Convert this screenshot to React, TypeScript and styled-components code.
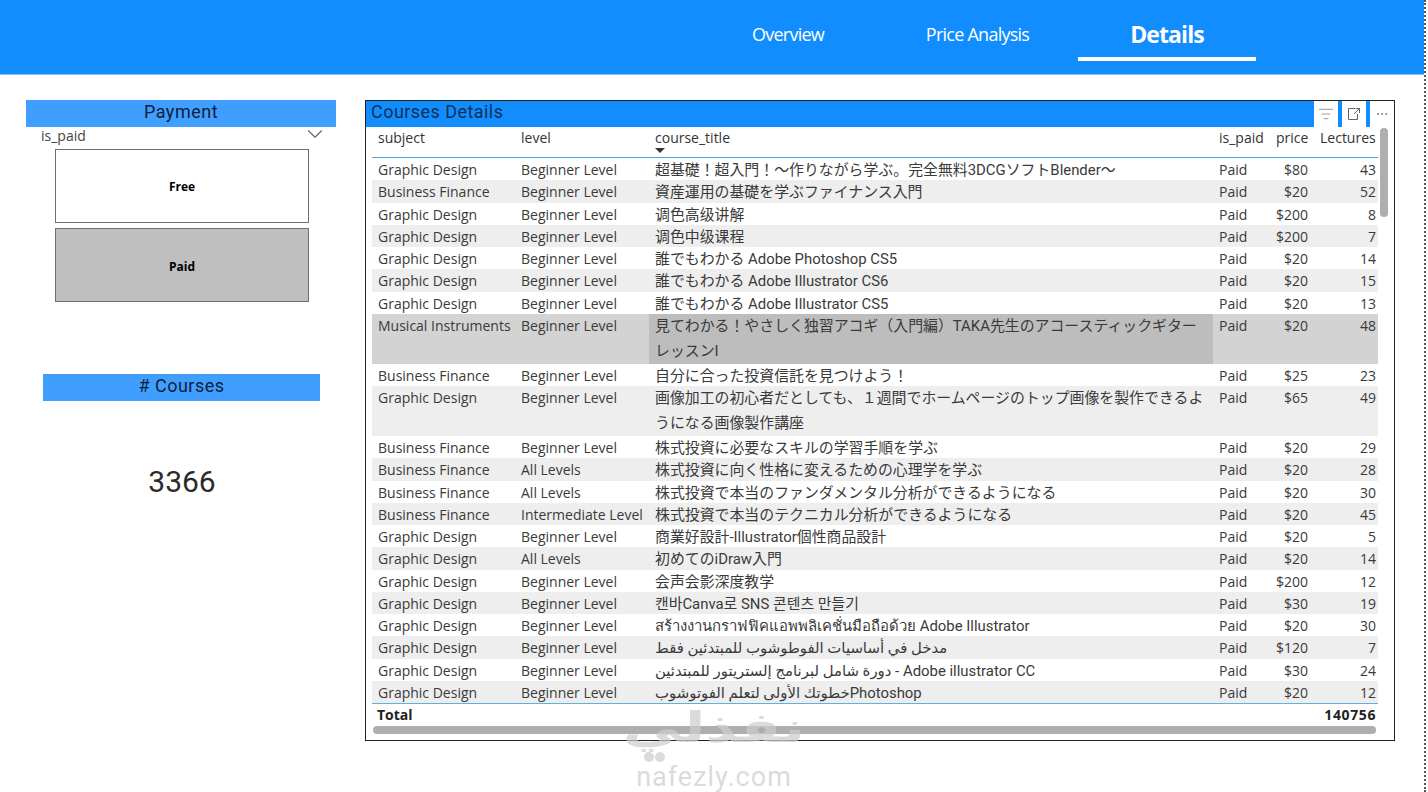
import React from 'react';
import styled, { createGlobalStyle } from 'styled-components';
import { ChevronDown, Ellipsis, ListFilter } from 'lucide-react';

const GlobalStyle = createGlobalStyle`
    html, body {
        margin: 0;
        padding: 0;
        background: #fff;
    }
`;

const COLUMNS = '143px 134px 564px 57px 44px 64px';
const TEXT_FONT = `'Open Sans', 'Noto Sans CJK JP', 'DejaVu Sans', sans-serif`;
const TITLE_FONT = `'Roboto', 'Noto Sans CJK JP', 'DejaVu Sans', sans-serif`;
const DIN_FONT = `'Roboto', 'Liberation Sans', sans-serif`;

const Page = styled.div`
    width: 1424px;
    height: 792px;
    position: relative;
    overflow: hidden;
    border-right: 2px dotted #555;
    font-family: ${TEXT_FONT};
`;

const Header = styled.header`
    height: 75px;
    box-sizing: border-box;
    background: #118dff;
    border-bottom: 1px solid #85c3fb;
    display: flex;
    padding-left: 714px;
`;

const NavItem = styled.div<{ $active?: boolean; $width: number; $shift?: number }>`
    width: ${(p) => p.$width}px;
    height: 61px;
    box-sizing: border-box;
    display: flex;
    align-items: center;
    justify-content: center;
    padding: 11px 0 0 ${(p) => p.$shift ?? 0}px;
    color: #fff;
    font-size: ${(p) => (p.$active ? '23px' : '18px')};
    font-weight: ${(p) => (p.$active ? 700 : 400)};
    letter-spacing: ${(p) => (p.$active ? '-0.9px' : '-0.75px')};
    border-bottom: ${(p) => (p.$active ? '4px solid #fff' : '4px solid transparent')};
`;

const Main = styled.main`
    display: flex;
    gap: 29px;
    padding: 25px 0 0 26px;
`;

const LeftColumn = styled.aside`
    width: 310px;
    display: flex;
    flex-direction: column;
`;

const CardTitle = styled.div<{ $inset?: boolean }>`
    height: 27px;
    box-sizing: border-box;
    padding-bottom: 4px;
    width: ${(p) => (p.$inset ? '277px' : '310px')};
    margin-left: ${(p) => (p.$inset ? '17px' : '0')};
    margin-top: ${(p) => (p.$inset ? '72px' : '0')};
    background: #409eff;
    color: #0f1f38;
    font-family: ${DIN_FONT};
    font-size: 18px;
    letter-spacing: 0.5px;
    display: flex;
    align-items: center;
    justify-content: center;
`;

const SlicerHead = styled.div`
    height: 22px;
    box-sizing: border-box;
    display: flex;
    align-items: center;
    justify-content: space-between;
    padding: 0 8px 6px 15px;
    font-size: 14px;
    color: #444;

    svg {
        margin: -9px 0 -7px;
    }
`;

const SlicerList = styled.div`
    display: flex;
    flex-direction: column;
    gap: 5px;
    margin-left: 29px;
    width: 254px;
`;

const SlicerButton = styled.div<{ $selected?: boolean }>`
    height: 74px;
    box-sizing: border-box;
    border: 1px solid #6f6f6f;
    background: ${(p) => (p.$selected ? '#bfbfbf' : '#fff')};
    color: #000;
    font-size: 12px;
    font-weight: 700;
    padding-top: ${(p) => (p.$selected ? '3px' : '0')};
    display: flex;
    align-items: center;
    justify-content: center;
`;

const BigNumber = styled.div`
    margin-top: 61px;
    text-align: center;
    font-family: ${DIN_FONT};
    font-size: 30px;
    line-height: 40px;
    color: #2b2b2b;
    padding-left: 2px;
`;

const TableCard = styled.section`
    width: 1030px;
    height: 641px;
    box-sizing: border-box;
    border: 1px solid #222;
    position: relative;
    display: flex;
    flex-direction: column;
`;

const TitleBar = styled.div`
    height: 26px;
    flex: none;
    background: #118dff;
    display: flex;
    align-items: center;
    justify-content: space-between;
    padding-left: 5px;
`;

const TitleText = styled.div`
    color: #0c3057;
    font-family: ${DIN_FONT};
    font-size: 18px;
    line-height: 20px;
    letter-spacing: 0.45px;
    margin-top: -5px;
`;

const ToolGroup = styled.div`
    display: flex;
    gap: 4px;
    height: 100%;
`;

const ToolButton = styled.div`
    width: 24px;
    background: #fff;
    display: flex;
    align-items: center;
    justify-content: center;
    color: #666;
`;

const TableBody = styled.div`
    padding-left: 6px;
    width: 1006px;
`;

const GridRow = styled.div`
    display: grid;
    grid-template-columns: ${COLUMNS};
`;

const HeadRow = styled(GridRow)`
    height: 31px;
    box-sizing: border-box;
    border-bottom: 1px solid #45a6ee;
    font-size: 14px;
    color: #333;
`;

const HeadCell = styled.div<{ $right?: boolean; $pad?: number }>`
    position: relative;
    padding: 1px ${(p) => p.$pad ?? 6}px 0 6px;
    text-align: ${(p) => (p.$right ? 'right' : 'left')};
    white-space: nowrap;
    line-height: 19px;
`;

const SortCaret = styled.span`
    position: absolute;
    left: 6px;
    top: 21px;
    width: 0;
    height: 0;
    border-left: 5px solid transparent;
    border-right: 5px solid transparent;
    border-top: 5px solid #333;
`;

const DataRow = styled(GridRow)<{ $tone: 'plain' | 'stripe' | 'selected'; $lines: number }>`
    height: ${(p) => (p.$lines === 2 ? '50px' : '22.25px')};
    background: ${(p) =>
        p.$tone === 'selected' ? '#d3d3d3' : p.$tone === 'stripe' ? '#eeeeee' : '#fff'};
    color: #3a3a3a;
    font-size: 14px;
`;

const Cell = styled.div<{ $right?: boolean; $pad?: number }>`
    padding: 0 ${(p) => p.$pad ?? 6}px 0 6px;
    text-align: ${(p) => (p.$right ? 'right' : 'left')};
    white-space: nowrap;
    line-height: 24px;
`;

const TitleCell = styled.div<{ $selected?: boolean }>`
    padding: 0 5px 0 6px;
    font-family: ${TITLE_FONT};
    font-size: 14.9px;
    line-height: 25px;
    background: ${(p) => (p.$selected ? '#bdbdbd' : 'transparent')};
    white-space: normal;
    overflow: hidden;
`;

const TotalRow = styled(GridRow)`
    height: 23px;
    box-sizing: border-box;
    border-top: 1px solid #5fb2de;
    font-size: 14px;
    font-weight: 700;
    color: #222;
    line-height: 21px;
`;

const TotalCell = styled.div<{ $span?: boolean }>`
    grid-column: ${(p) => (p.$span ? '1 / 6' : '6')};
    padding: ${(p) => (p.$span ? '0 0 0 5px' : '0 2px 0 0')};
    text-align: ${(p) => (p.$span ? 'left' : 'right')};
    letter-spacing: ${(p) => (p.$span ? '0' : '0.6px')};
`;

const HorizontalThumb = styled.div`
    height: 8px;
    width: 1003px;
    margin: 0 0 0 7px;
    background: #aeaeae;
    border-radius: 4px;
`;

const VerticalThumb = styled.div`
    position: absolute;
    left: 1014px;
    top: 27px;
    width: 8px;
    height: 89px;
    background: #aeaeae;
    border-radius: 4px;
`;

const Watermark = styled.div`
    position: absolute;
    left: 612px;
    top: 706px;
    width: 204px;
    text-align: center;
    color: rgba(205, 205, 205, 0.72);
    pointer-events: none;
`;

const WatermarkMark = styled.div`
    font-family: 'DejaVu Sans', sans-serif;
    font-size: 42px;
    font-weight: 700;
    line-height: 44px;
    transform: scaleX(1.42);
`;

const WatermarkDots = styled.div`
    display: flex;
    gap: 1px;
    height: 10px;
    margin-top: 2px;
    padding-left: 32px;
`;

const WatermarkDot = styled.span`
    width: 10px;
    height: 10px;
    border-radius: 50%;
    background: rgba(205, 205, 205, 0.72);
`;

const WatermarkSite = styled.div`
    font-family: ${DIN_FONT};
    font-size: 27px;
    line-height: 32px;
    letter-spacing: 1px;
    margin-top: -1px;
`;

type Course = [string, string, string, string, string];

const BI = 'Business Finance';
const GD = 'Graphic Design';
const BL = 'Beginner Level';
const AL = 'All Levels';

const courses: Course[] = [
    [GD, BL, '超基礎！超入門！〜作りながら学ぶ。完全無料3DCGソフトBlender〜', '$80', '43'],
    [BI, BL, '資産運用の基礎を学ぶファイナンス入門', '$20', '52'],
    [GD, BL, '调色高级讲解', '$200', '8'],
    [GD, BL, '调色中级课程', '$200', '7'],
    [GD, BL, '誰でもわかる Adobe Photoshop CS5', '$20', '14'],
    [GD, BL, '誰でもわかる Adobe Illustrator CS6', '$20', '15'],
    [GD, BL, '誰でもわかる Adobe Illustrator CS5', '$20', '13'],
    ['Musical Instruments', BL, '見てわかる！やさしく独習アコギ（入門編）TAKA先生のアコースティックギターレッスンI', '$20', '48'],
    [BI, BL, '自分に合った投資信託を見つけよう！', '$25', '23'],
    [GD, BL, '画像加工の初心者だとしても、１週間でホームページのトップ画像を製作できるようになる画像製作講座', '$65', '49'],
    [BI, BL, '株式投資に必要なスキルの学習手順を学ぶ', '$20', '29'],
    [BI, AL, '株式投資に向く性格に変えるための心理学を学ぶ', '$20', '28'],
    [BI, AL, '株式投資で本当のファンダメンタル分析ができるようになる', '$20', '30'],
    [BI, 'Intermediate Level', '株式投資で本当のテクニカル分析ができるようになる', '$20', '45'],
    [GD, BL, '商業好設計-Illustrator個性商品設計', '$20', '5'],
    [GD, AL, '初めてのiDraw入門', '$20', '14'],
    [GD, BL, '会声会影深度教学', '$200', '12'],
    [GD, BL, '캔바Canva로 SNS 콘텐츠 만들기', '$30', '19'],
    [GD, BL, 'สร้างงานกราฟฟิคแอพพลิเคชั่นมือถือด้วย Adobe Illustrator', '$20', '30'],
    [GD, BL, 'مدخل في أساسيات الفوطوشوب للمبتدئين فقط', '$120', '7'],
    [GD, BL, 'دورة شامل لبرنامج إلستريتور للمبتدئين - Adobe illustrator CC', '$30', '24'],
    [GD, BL, 'خطوتك الأولى لتعلم الفوتوشوبPhotoshop', '$20', '12'],
];

const SELECTED = 7;
const DOUBLE_LINE = [7, 9];

const FocusIcon = () => (
    <svg width="16" height="16" viewBox="0 0 16 16" fill="none" stroke="currentColor" strokeWidth="1">
        <path d="M9 2.5H2.5v11h9V8" />
        <path d="M13.5 7V2.5H9.5M13.5 2.5L8 8" />
    </svg>
);

const App: React.FC = () => {
    return (
        <Page>
            <GlobalStyle />
            <Header>
                <NavItem $width={148}>Overview</NavItem>
                <NavItem $width={216} $shift={15}>Price Analysis</NavItem>
                <NavItem $width={178} $active>Details</NavItem>
            </Header>
            <Main>
                <LeftColumn>
                    <CardTitle>Payment</CardTitle>
                    <SlicerHead>
                        <span>is_paid</span>
                        <ChevronDown size={26} strokeWidth={1} color="#666" />
                    </SlicerHead>
                    <SlicerList>
                        <SlicerButton>Free</SlicerButton>
                        <SlicerButton $selected>Paid</SlicerButton>
                    </SlicerList>
                    <CardTitle $inset># Courses</CardTitle>
                    <BigNumber>3366</BigNumber>
                </LeftColumn>
                <TableCard>
                    <TitleBar>
                        <TitleText>Courses Details</TitleText>
                        <ToolGroup>
                            <ToolButton><ListFilter size={16} strokeWidth={1} /></ToolButton>
                            <ToolButton><FocusIcon /></ToolButton>
                            <ToolButton><Ellipsis size={14} strokeWidth={1.2} /></ToolButton>
                        </ToolGroup>
                    </TitleBar>
                    <TableBody>
                        <HeadRow>
                            <HeadCell>subject</HeadCell>
                            <HeadCell>level</HeadCell>
                            <HeadCell>course_title<SortCaret /></HeadCell>
                            <HeadCell>is_paid</HeadCell>
                            <HeadCell $right>price</HeadCell>
                            <HeadCell $right $pad={4}>Lectures</HeadCell>
                        </HeadRow>
                        {courses.map((c, i) => (
                            <DataRow
                                key={i}
                                $lines={DOUBLE_LINE.includes(i) ? 2 : 1}
                                $tone={i === SELECTED ? 'selected' : i % 2 === 1 ? 'stripe' : 'plain'}
                            >
                                <Cell>{c[0]}</Cell>
                                <Cell>{c[1]}</Cell>
                                <TitleCell $selected={i === SELECTED}>{c[2]}</TitleCell>
                                <Cell>Paid</Cell>
                                <Cell $right>{c[3]}</Cell>
                                <Cell $right $pad={2}>{c[4]}</Cell>
                            </DataRow>
                        ))}
                        <TotalRow>
                            <TotalCell $span>Total</TotalCell>
                            <TotalCell>140756</TotalCell>
                        </TotalRow>
                    </TableBody>
                    <HorizontalThumb />
                    <VerticalThumb />
                </TableCard>
            </Main>
            <Watermark>
                <WatermarkMark>نفذلي</WatermarkMark>
                <WatermarkDots>
                    <WatermarkDot />
                    <WatermarkDot />
                </WatermarkDots>
                <WatermarkSite>nafezly.com</WatermarkSite>
            </Watermark>
        </Page>
    );
};

export default App;
